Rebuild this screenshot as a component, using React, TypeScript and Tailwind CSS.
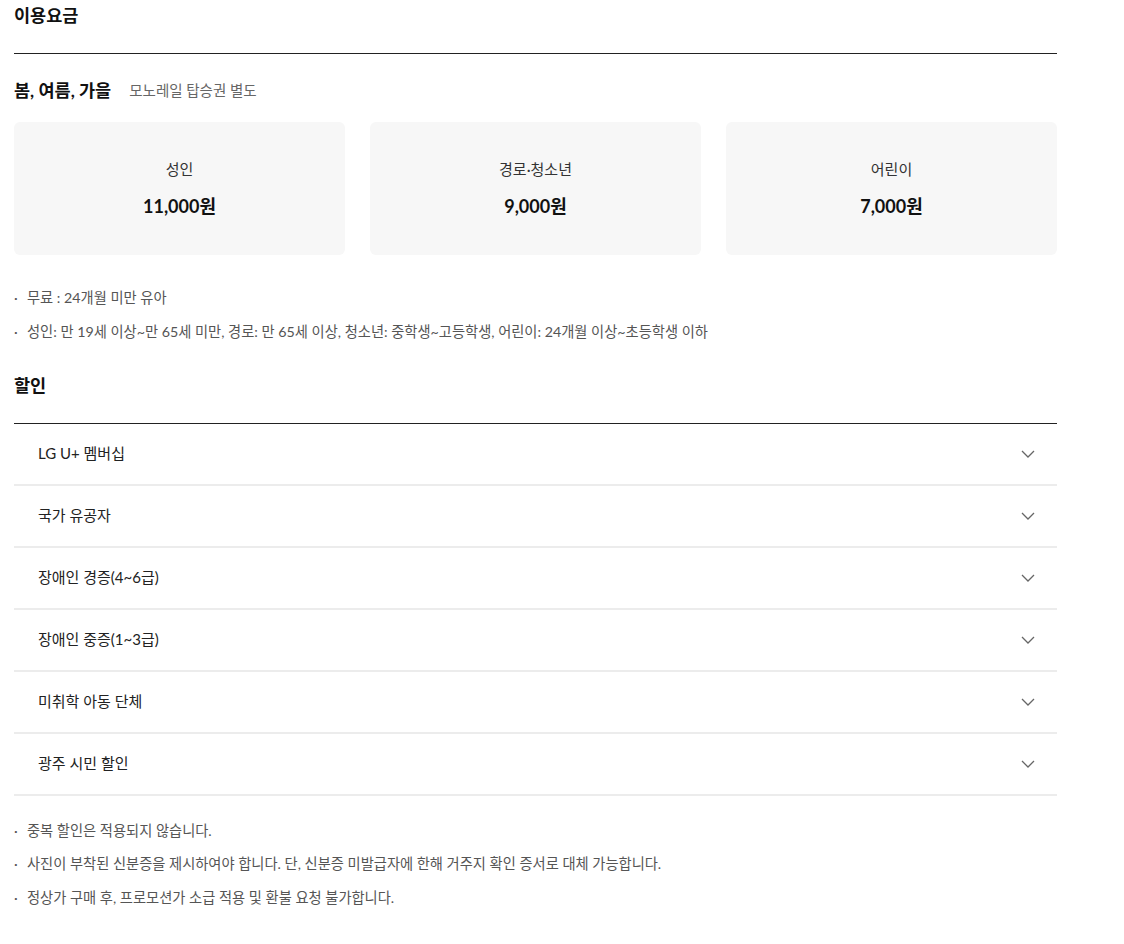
import React from 'react';

const PRICES = [
    { label: '성인', price: '11,000원' },
    { label: '경로·청소년', price: '9,000원' },
    { label: '어린이', price: '7,000원' },
];

const DISCOUNTS = [
    'LG U+ 멤버십',
    '국가 유공자',
    '장애인 경증(4~6급)',
    '장애인 중증(1~3급)',
    '미취학 아동 단체',
    '광주 시민 할인',
];

const Notes: React.FC<{ items: string[] }> = ({ items }) => (
    <ul className="flex flex-col gap-[13.5px]">
        {items.map(item => (
            <li key={item} className="flex text-[14.25px] leading-[20px] text-[#555]">
                <span className="w-[13px] shrink-0">·</span>
                <span>{item}</span>
            </li>
        ))}
    </ul>
);

const Chevron = () => (
    <svg width="14" height="8" viewBox="0 0 14 8" fill="none">
        <path d="M1 1l6 6 6-6" stroke="#666" strokeWidth="1.3" />
    </svg>
);

export default function App() {
    return (
        <div
            className="bg-white min-h-[944px] text-[#111]"
            style={{ fontFamily: 'Lato, "Noto Sans CJK KR", sans-serif' }}
        >
            <div className="ml-[14px] w-[1043px]">
                <h2 className="pt-[3px] pb-[24px] text-[17.5px] leading-[26px] font-bold border-b border-[#222]">
                    이용요금
                </h2>

                <div className="mt-[24px] flex items-center gap-[18px]">
                    <h3 className="text-[17.5px] leading-[26px] font-bold">봄, 여름, 가을</h3>
                    <span className="text-[14.5px] text-[#666]">모노레일 탑승권 별도</span>
                </div>

                <div className="mt-[18px] grid grid-cols-3 gap-[25px]">
                    {PRICES.map(p => (
                        <div
                            key={p.label}
                            className="h-[133px] rounded-[6px] bg-[#f7f7f7] flex flex-col items-center justify-center gap-[13px]"
                        >
                            <span className="text-[15px] leading-[22px] text-[#333]">{p.label}</span>
                            <span className="text-[18px] leading-[26px] font-bold">{p.price}</span>
                        </div>
                    ))}
                </div>

                <div className="mt-[33px]">
                    <Notes
                        items={[
                            '무료 : 24개월 미만 유아',
                            '성인: 만 19세 이상~만 65세 미만, 경로: 만 65세 이상, 청소년: 중학생~고등학생, 어린이: 24개월 이상~초등학생 이하',
                        ]}
                    />
                </div>

                <h2 className="mt-[31px] pb-[24px] text-[17.5px] leading-[26px] font-bold border-b border-[#222]">
                    할인
                </h2>

                <ul>
                    {DISCOUNTS.map(d => (
                        <li
                            key={d}
                            className="h-[62px] flex items-center justify-between pl-[24px] pr-[22px] border-b-2 border-[#ececec]"
                        >
                            <span className="text-[15px] text-[#222]">{d}</span>
                            <Chevron />
                        </li>
                    ))}
                </ul>

                <div className="mt-[25px]">
                    <Notes
                        items={[
                            '중복 할인은 적용되지 않습니다.',
                            '사진이 부착된 신분증을 제시하여야 합니다. 단, 신분증 미발급자에 한해 거주지 확인 증서로 대체 가능합니다.',
                            '정상가 구매 후, 프로모션가 소급 적용 및 환불 요청 불가합니다.',
                        ]}
                    />
                </div>
            </div>
        </div>
    );
}
